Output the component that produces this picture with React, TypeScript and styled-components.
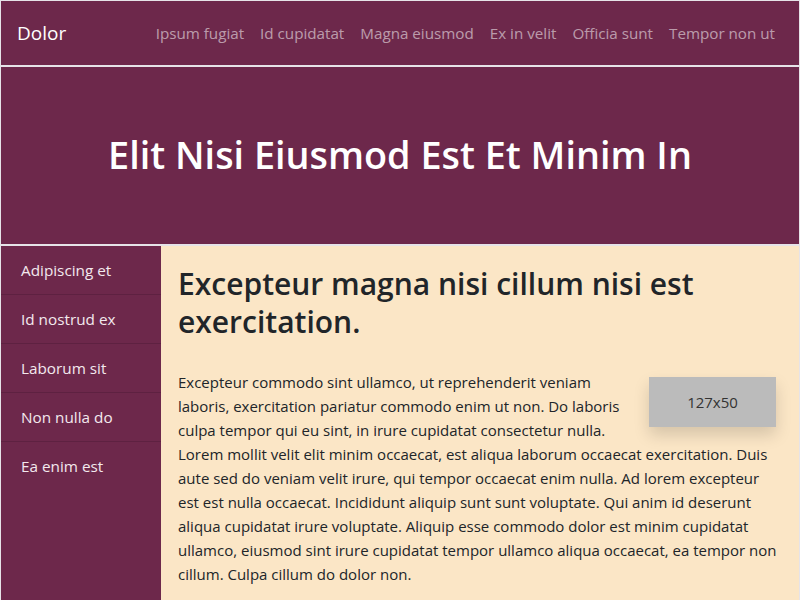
import React from "react";
import styled, { createGlobalStyle } from "styled-components";

const GlobalStyle = createGlobalStyle`
  html, body {
    margin: 0;
    padding: 0;
    background: #e6e3e8;
  }
  body {
    font-family: "Open Sans", "Noto Sans", sans-serif;
    color: #212529;
  }
  * {
    box-sizing: border-box;
  }
`;

const Page = styled.div`
  display: flex;
  flex-direction: column;
  gap: 2px;
  min-height: 600px;
  padding: 1px 1px 0 1px;
`;

const NavBar = styled.nav`
  display: flex;
  align-items: center;
  justify-content: space-between;
  height: 64px;
  padding: 0 16px;
  background: #6d284b;
`;

const Brand = styled.a`
  font-size: 19px;
  color: #ffffff;
  text-decoration: none;
`;

const NavLinks = styled.ul`
  display: flex;
  list-style: none;
  margin: 0;
  padding: 0;
`;

const NavLink = styled.a`
  display: block;
  padding: 8px;
  font-size: 15.2px;
  color: rgba(255, 255, 255, 0.55);
  text-decoration: none;
`;

const Hero = styled.header`
  display: flex;
  align-items: center;
  justify-content: center;
  height: 177px;
  padding-bottom: 3px;
  background: #6d284b;
`;

const HeroTitle = styled.h1`
  margin: 0;
  font-size: 37.8px;
  font-weight: 600;
  color: #ffffff;
`;

const Body = styled.div`
  flex: 1;
  display: flex;
`;

const Sidebar = styled.aside`
  width: 160px;
  flex-shrink: 0;
  background: #6d284b;
`;

const SideItem = styled.a`
  display: block;
  padding: 12px 20px;
  line-height: 24px;
  font-size: 15.3px;
  color: #f3e9ee;
  text-decoration: none;
  border-bottom: 1px solid #5e2141;

  &:last-child {
    border-bottom: none;
  }
`;

const Main = styled.main`
  flex: 1;
  padding: 19px 16px 16px 17px;
  background: #fbe6c6;
`;

const Heading = styled.h2`
  margin: 0 0 29px;
  font-size: 30px;
  line-height: 38px;
  font-weight: 600;
`;

const Text = styled.p`
  margin: 0;
  font-size: 15px;
  line-height: 24px;
`;

const Placeholder = styled.div`
  float: right;
  display: flex;
  align-items: center;
  justify-content: center;
  width: 127px;
  height: 50px;
  margin: 7px 7px 8px 8px;
  background: #bbbbbb;
  color: #333333;
  font-size: 15px;
  box-shadow: 0 8px 16px rgba(0, 0, 0, 0.15);
`;

const links = [
  "Ipsum fugiat",
  "Id cupidatat",
  "Magna eiusmod",
  "Ex in velit",
  "Officia sunt",
  "Tempor non ut",
];

const sideItems = [
  "Adipiscing et",
  "Id nostrud ex",
  "Laborum sit",
  "Non nulla do",
  "Ea enim est",
];

export default function App() {
  return (
    <>
      <GlobalStyle />
      <Page>
        <NavBar>
          <Brand href="#">Dolor</Brand>
          <NavLinks>
            {links.map((l) => (
              <li key={l}>
                <NavLink href="#">{l}</NavLink>
              </li>
            ))}
          </NavLinks>
        </NavBar>
        <Hero>
          <HeroTitle>Elit Nisi Eiusmod Est Et Minim In</HeroTitle>
        </Hero>
        <Body>
          <Sidebar>
            {sideItems.map((s) => (
              <SideItem key={s} href="#">
                {s}
              </SideItem>
            ))}
          </Sidebar>
          <Main>
            <Heading>Excepteur magna nisi cillum nisi est exercitation.</Heading>
            <Placeholder>127x50</Placeholder>
            <Text>
              Excepteur commodo sint ullamco, ut reprehenderit veniam laboris,
              exercitation pariatur commodo enim ut non. Do laboris culpa tempor
              qui eu sint, in irure cupidatat consectetur nulla. Lorem mollit
              velit elit minim occaecat, est aliqua laborum occaecat
              exercitation. Duis aute sed do veniam velit irure, qui tempor
              occaecat enim nulla. Ad lorem excepteur est est nulla occaecat.
              Incididunt aliquip sunt sunt voluptate. Qui anim id deserunt
              aliqua cupidatat irure voluptate. Aliquip esse commodo dolor est
              minim cupidatat ullamco, eiusmod sint irure cupidatat tempor
              ullamco aliqua occaecat, ea tempor non cillum. Culpa cillum do
              dolor non.
            </Text>
          </Main>
        </Body>
      </Page>
    </>
  );
}
